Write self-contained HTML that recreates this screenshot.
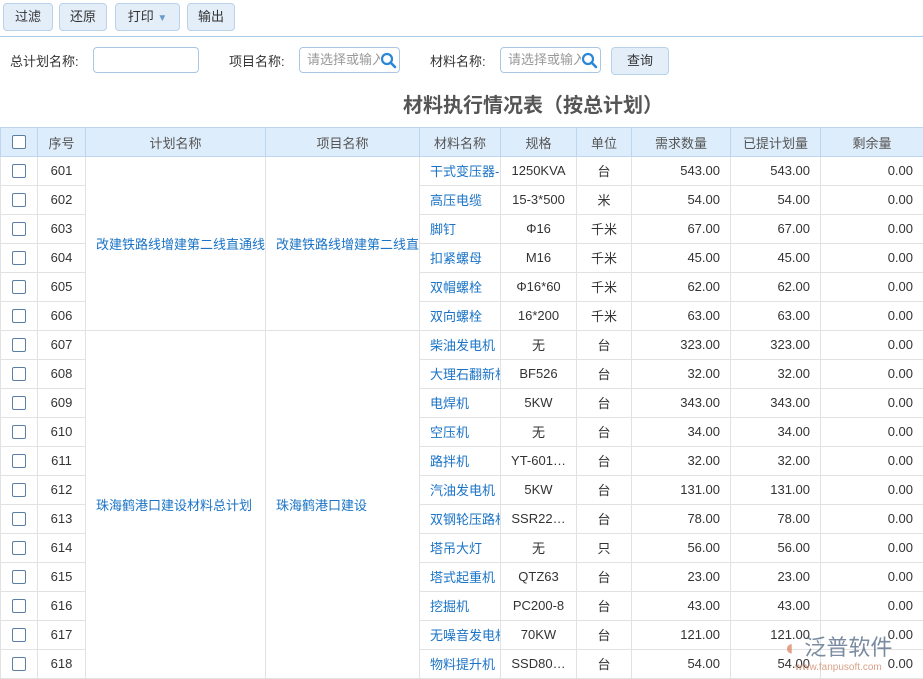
<html><head><style>
body{margin:0;width:923px;height:677px;overflow:hidden;background:#fff;font-family:"Liberation Sans","Noto Sans CJK SC",sans-serif;font-size:13px;color:#333;position:relative}
.btn{position:absolute;top:3px;height:26px;border:1px solid #b9d3ea;border-radius:4px;background:#e3eef9;line-height:26px;text-align:center;color:#333;font-size:13px}
.tl{position:absolute;top:36px;left:0;width:923px;height:1px;background:#a9cbe8}
.lbl{position:absolute;top:51px;font-size:13px}
.inp{position:absolute;top:47px;height:26px;border:1px solid #a9c7e4;border-radius:4px;background:#fff;color:#999;font-size:13px;line-height:24px;padding-left:7px;box-sizing:border-box;overflow:hidden;white-space:nowrap}
.ic{position:absolute;right:2px;top:4px;background:#fff;width:17px;height:17px}
.title{position:absolute;top:89px;left:0;width:1066px;text-align:center;font-size:20px;font-weight:bold;color:#555}
table{position:absolute;top:127px;left:0;border-collapse:collapse;table-layout:fixed;width:923px}
td,th{border:1px solid #e2e2e2;height:29px;padding:0 10px;white-space:nowrap;overflow:hidden;font-size:13px;text-overflow:clip;box-sizing:border-box}
th{background:#deedfb;font-weight:normal;color:#555;height:29px;border-color:#bcd6ee;padding:0 4px}
td{text-align:center;padding-top:0;padding-bottom:1px}
.r{text-align:right}
.l{text-align:left;color:#1a73c6}
td.l{padding-left:10px;padding-right:0}
.cb{display:inline-block;width:12px;height:12px;border:1px solid #5a7fa3;border-radius:2px;background:#fff;vertical-align:middle}
.wm{position:absolute;left:785px;top:630px;color:#5b6f8a;font-size:22px;opacity:.8}
</style></head><body>
<div class="btn" style="left:3px;width:48px">过滤</div>
<div class="btn" style="left:59px;width:46px">还原</div>
<div class="btn" style="left:115px;width:63px">打印 <span style="color:#6a9bcc;font-size:10px">▼</span></div>
<div class="btn" style="left:187px;width:46px">输出</div>
<div class="tl"></div>
<div class="lbl" style="left:10px">总计划名称:</div>
<div class="inp" style="left:93px;width:106px"></div>
<div class="lbl" style="left:229px">项目名称:</div>
<div class="inp" style="left:299px;width:101px">请选择或输入<svg class="ic" viewBox="0 0 17 17"><circle cx="7" cy="7" r="5" fill="none" stroke="#2a86d6" stroke-width="2.2"/><path d="M10.5 10.5L15 15" stroke="#2a86d6" stroke-width="2.6" stroke-linecap="round"/></svg></div>
<div class="lbl" style="left:430px">材料名称:</div>
<div class="inp" style="left:500px;width:101px">请选择或输入<svg class="ic" viewBox="0 0 17 17"><circle cx="7" cy="7" r="5" fill="none" stroke="#2a86d6" stroke-width="2.2"/><path d="M10.5 10.5L15 15" stroke="#2a86d6" stroke-width="2.6" stroke-linecap="round"/></svg></div>
<div class="btn" style="left:611px;top:47px;width:56px;height:26px">查询</div>
<div class="title">材料执行情况表（按总计划）</div>
<table>
<colgroup><col style="width:37px"><col style="width:48px"><col style="width:180px"><col style="width:154px"><col style="width:81px"><col style="width:76px"><col style="width:55px"><col style="width:99px"><col style="width:90px"><col style="width:103px"></colgroup>
<tr><th><span class="cb"></span></th><th>序号</th><th>计划名称</th><th>项目名称</th><th>材料名称</th><th>规格</th><th>单位</th><th>需求数量</th><th>已提计划量</th><th>剩余量</th></tr>
<tr><td><span class="cb"></span></td><td>601</td><td rowspan="6" class="l">改建铁路线增建第二线直通线</td><td rowspan="6" class="l">改建铁路线增建第二线直通线</td><td class="l">干式变压器-</td><td>1250KVA</td><td>台</td><td class="r">543.00</td><td class="r">543.00</td><td class="r">0.00</td></tr>
<tr><td><span class="cb"></span></td><td>602</td><td class="l">高压电缆</td><td>15-3*500</td><td>米</td><td class="r">54.00</td><td class="r">54.00</td><td class="r">0.00</td></tr>
<tr><td><span class="cb"></span></td><td>603</td><td class="l">脚钉</td><td>Φ16</td><td>千米</td><td class="r">67.00</td><td class="r">67.00</td><td class="r">0.00</td></tr>
<tr><td><span class="cb"></span></td><td>604</td><td class="l">扣紧螺母</td><td>M16</td><td>千米</td><td class="r">45.00</td><td class="r">45.00</td><td class="r">0.00</td></tr>
<tr><td><span class="cb"></span></td><td>605</td><td class="l">双帽螺栓</td><td>Φ16*60</td><td>千米</td><td class="r">62.00</td><td class="r">62.00</td><td class="r">0.00</td></tr>
<tr><td><span class="cb"></span></td><td>606</td><td class="l">双向螺栓</td><td>16*200</td><td>千米</td><td class="r">63.00</td><td class="r">63.00</td><td class="r">0.00</td></tr>
<tr><td><span class="cb"></span></td><td>607</td><td rowspan="12" class="l">珠海鹤港口建设材料总计划</td><td rowspan="12" class="l">珠海鹤港口建设</td><td class="l">柴油发电机</td><td>无</td><td>台</td><td class="r">323.00</td><td class="r">323.00</td><td class="r">0.00</td></tr>
<tr><td><span class="cb"></span></td><td>608</td><td class="l">大理石翻新机</td><td>BF526</td><td>台</td><td class="r">32.00</td><td class="r">32.00</td><td class="r">0.00</td></tr>
<tr><td><span class="cb"></span></td><td>609</td><td class="l">电焊机</td><td>5KW</td><td>台</td><td class="r">343.00</td><td class="r">343.00</td><td class="r">0.00</td></tr>
<tr><td><span class="cb"></span></td><td>610</td><td class="l">空压机</td><td>无</td><td>台</td><td class="r">34.00</td><td class="r">34.00</td><td class="r">0.00</td></tr>
<tr><td><span class="cb"></span></td><td>611</td><td class="l">路拌机</td><td>YT-601…</td><td>台</td><td class="r">32.00</td><td class="r">32.00</td><td class="r">0.00</td></tr>
<tr><td><span class="cb"></span></td><td>612</td><td class="l">汽油发电机</td><td>5KW</td><td>台</td><td class="r">131.00</td><td class="r">131.00</td><td class="r">0.00</td></tr>
<tr><td><span class="cb"></span></td><td>613</td><td class="l">双钢轮压路机</td><td>SSR22…</td><td>台</td><td class="r">78.00</td><td class="r">78.00</td><td class="r">0.00</td></tr>
<tr><td><span class="cb"></span></td><td>614</td><td class="l">塔吊大灯</td><td>无</td><td>只</td><td class="r">56.00</td><td class="r">56.00</td><td class="r">0.00</td></tr>
<tr><td><span class="cb"></span></td><td>615</td><td class="l">塔式起重机</td><td>QTZ63</td><td>台</td><td class="r">23.00</td><td class="r">23.00</td><td class="r">0.00</td></tr>
<tr><td><span class="cb"></span></td><td>616</td><td class="l">挖掘机</td><td>PC200-8</td><td>台</td><td class="r">43.00</td><td class="r">43.00</td><td class="r">0.00</td></tr>
<tr><td><span class="cb"></span></td><td>617</td><td class="l">无噪音发电机</td><td>70KW</td><td>台</td><td class="r">121.00</td><td class="r">121.00</td><td class="r">0.00</td></tr>
<tr><td><span class="cb"></span></td><td>618</td><td class="l">物料提升机</td><td>SSD80…</td><td>台</td><td class="r">54.00</td><td class="r">54.00</td><td class="r">0.00</td></tr>
</table>
<div class="wm"><span style="color:#e08a6a">◐</span> 泛普软件<div style="font-size:10px;margin-left:10px;color:#d08a6a">www.fanpusoft.com</div></div>
</body></html>
